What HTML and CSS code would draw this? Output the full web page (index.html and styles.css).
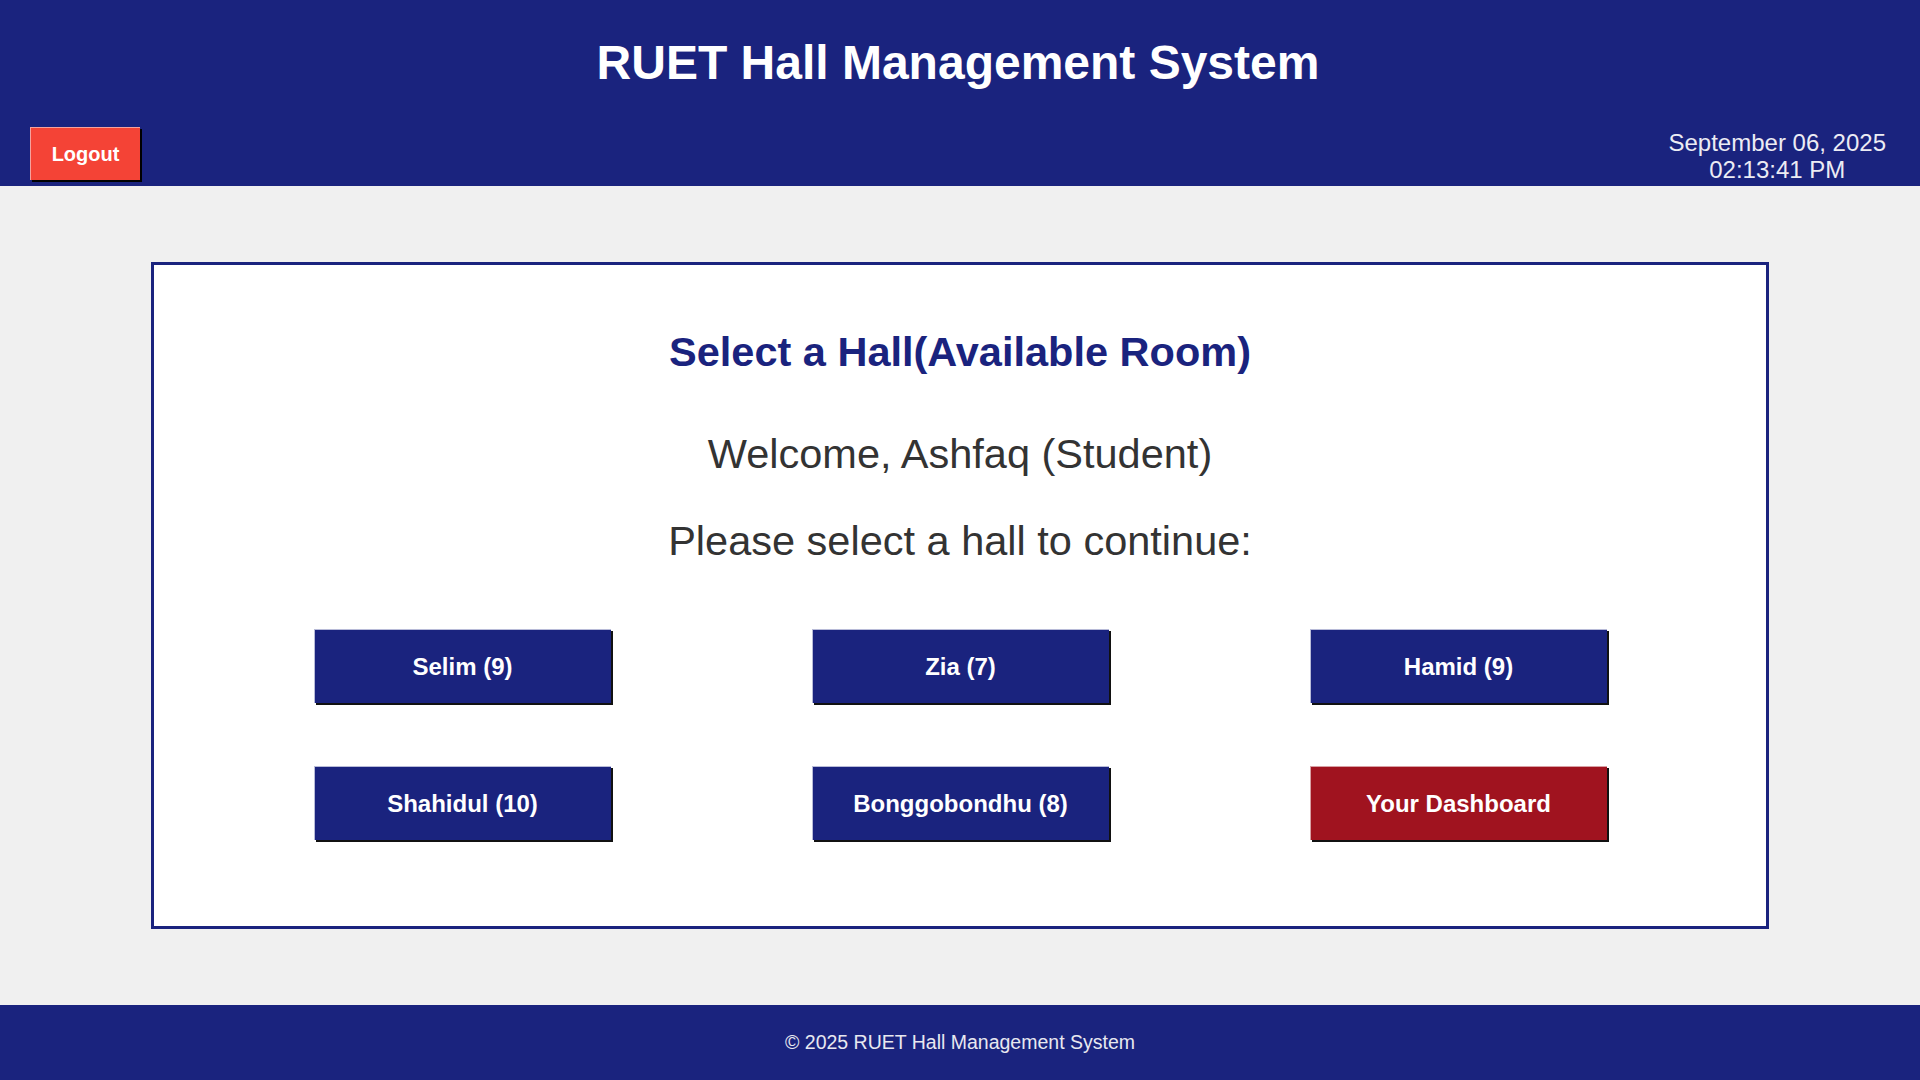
FILE: index.html
```html
<!DOCTYPE html>
<html lang="en">
<head>
<meta charset="utf-8">
<title>RUET Hall Management System</title>
<link rel="stylesheet" href="styles.css">
</head>
<body>
<header class="site-header">
  <h1 class="site-title">RUET Hall Management System</h1>
  <div class="header-bar">
    <button class="logout-btn">Logout</button>
    <div class="clock">
      <div>September 06, 2025</div>
      <div>02:13:41 PM</div>
    </div>
  </div>
</header>
<main class="main">
  <section class="card">
    <h2 class="card-title">Select a Hall(Available Room)</h2>
    <p class="welcome">Welcome, Ashfaq (Student)</p>
    <p class="prompt">Please select a hall to continue:</p>
    <div class="hall-grid">
      <button class="hall-btn">Selim (9)</button>
      <button class="hall-btn">Zia (7)</button>
      <button class="hall-btn">Hamid (9)</button>
      <button class="hall-btn">Shahidul (10)</button>
      <button class="hall-btn">Bonggobondhu (8)</button>
      <button class="hall-btn dash-btn">Your Dashboard</button>
    </div>
  </section>
</main>
<footer class="site-footer">© 2025 RUET Hall Management System</footer>
</body>
</html>
```

FILE: styles.css
```css
* { box-sizing: border-box; }
html, body { height: 100%; }
body {
  margin: 0;
  font-family: "Liberation Sans", Arial, sans-serif;
  background: #f0f0f0;
  display: flex;
  flex-direction: column;
  min-height: 1080px;
}
.site-header {
  background: #1a237e;
  color: #fff;
  height: 186px;
  padding: 0 34px 0 30px;
  display: flex;
  flex-direction: column;
}
.site-title {
  margin: 0;
  padding-top: 36px;
  text-align: center;
  font-size: 48px;
  font-weight: bold;
  line-height: 54px;
}
.header-bar {
  margin-top: auto;
  display: flex;
  justify-content: space-between;
  align-items: flex-end;
  padding-bottom: 6px;
}
.logout-btn {
  background: #f44336;
  color: #fff;
  font-family: inherit;
  font-size: 20px;
  font-weight: bold;
  width: 110px;
  height: 53px;
  border: none;
  border-top: 1px solid #f6a29c;
  border-left: 1px solid #f6a29c;
  box-shadow: 2px 2px 0 #000;
}
.clock {
  text-align: center;
  font-size: 24px;
  line-height: 27px;
  color: #ececf4;
  margin-bottom: -3px;
}
.main {
  flex: 1;
  display: flex;
  align-items: center;
  justify-content: center;
  padding: 0 151px;
}
.card {
  width: 100%;
  height: 667px;
  background: #fff;
  border: 3px solid #1a237e;
  text-align: center;
  padding-top: 62px;
}
.card-title {
  margin: 0;
  color: #1a237e;
  font-size: 41.5px;
  line-height: 50px;
  font-weight: bold;
}
.welcome {
  margin: 50px 0 0;
  color: #333;
  font-size: 41.5px;
  line-height: 54px;
}
.prompt {
  margin: 33px 0 0;
  color: #333;
  font-size: 41.5px;
  line-height: 54px;
}
.hall-grid {
  margin: 61px auto 0;
  display: grid;
  grid-template-columns: repeat(3, 297px);
  column-gap: 201px;
  row-gap: 63px;
  justify-content: center;
}
.hall-btn {
  height: 74px;
  background: #1a237e;
  color: #fff;
  font-family: inherit;
  font-size: 24px;
  font-weight: bold;
  border: none;
  border-top: 1px solid #b8bbd8;
  border-left: 1px solid #b8bbd8;
  box-shadow: 2px 2px 0 #111;
}
.dash-btn {
  background: #a0131f;
  border-top-color: #d8a0a4;
  border-left-color: #d8a0a4;
}
.site-footer {
  background: #1a237e;
  color: #e8e8f0;
  height: 75px;
  display: flex;
  align-items: center;
  justify-content: center;
  font-size: 19.5px;
}
```
